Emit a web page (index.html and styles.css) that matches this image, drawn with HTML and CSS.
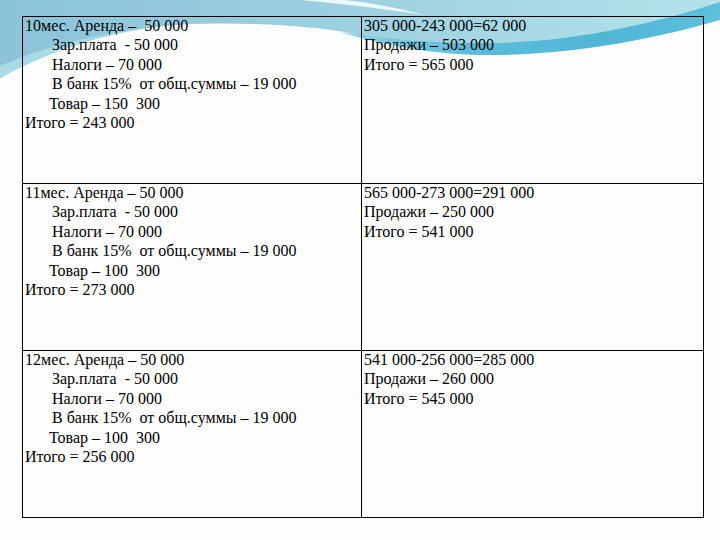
FILE: index.html
```html
<!DOCTYPE html>
<html lang="ru">
<head>
<meta charset="utf-8">
<title>Slide</title>
<link rel="stylesheet" href="styles.css">
</head>
<body>
<div class="slide">
  <svg class="bg" width="720" height="540" viewBox="0 0 720 540" aria-hidden="true">
    <defs>
      <linearGradient id="g1" x1="0" y1="0" x2="1" y2="0">
        <stop offset="0" stop-color="#8cc3d9"/>
        <stop offset="0.45" stop-color="#9bcfe0"/>
        <stop offset="1" stop-color="#b4e2ea"/>
      </linearGradient>
      <linearGradient id="g2" x1="0" y1="0" x2="1" y2="0">
        <stop offset="0" stop-color="#8fd0e2"/>
        <stop offset="0.35" stop-color="#5dbcd9"/>
        <stop offset="0.7" stop-color="#4fb6d6"/>
        <stop offset="1" stop-color="#5cc0da"/>
      </linearGradient>
    </defs>
    <rect width="720" height="540" fill="#fdfdfd"/>
    <path d="M0,0 H720 V18 C680,30 640,40 600,45 C550,52 490,54 450,50 C410,46 380,40 350,33 C310,25 240,22 190,24 C120,28 60,44 0,78 Z" fill="url(#g1)"/>
    <path d="M0,66 C55,42 115,30 190,24 C120,28 60,46 0,78 Z" fill="#a8dbe6"/>
    <path d="M340,32 C400,41 450,44 500,43 C580,40 650,25 720,2 V20 C650,40 580,53 500,55 C440,56 390,47 340,32 Z" fill="url(#g2)"/>
    <path d="M300,0 C345,4 385,9 425,15 C395,7 365,2 345,0 Z" fill="#eef8fa"/>
  </svg>

  <div class="grid">
    <div class="cell">
      <div class="ln">10мес. Аренда –  50 000</div>
      <div class="ln i28">Зар.плата  - 50 000</div>
      <div class="ln i28">Налоги – 70 000</div>
      <div class="ln i28">В банк 15%  от общ.суммы – 19 000</div>
      <div class="ln i24">Товар – 150  300</div>
      <div class="ln">Итого = 243 000</div>
    </div>
    <div class="cell">
      <div class="ln">305 000-243 000=62 000</div>
      <div class="ln">Продажи – 503 000</div>
      <div class="ln">Итого = 565 000</div>
    </div>

    <div class="cell">
      <div class="ln">11мес. Аренда – 50 000</div>
      <div class="ln i28">Зар.плата  - 50 000</div>
      <div class="ln i28">Налоги – 70 000</div>
      <div class="ln i28">В банк 15%  от общ.суммы – 19 000</div>
      <div class="ln i24">Товар – 100  300</div>
      <div class="ln">Итого = 273 000</div>
    </div>
    <div class="cell">
      <div class="ln">565 000-273 000=291 000</div>
      <div class="ln">Продажи – 250 000</div>
      <div class="ln">Итого = 541 000</div>
    </div>

    <div class="cell">
      <div class="ln">12мес. Аренда – 50 000</div>
      <div class="ln i28">Зар.плата  - 50 000</div>
      <div class="ln i28">Налоги – 70 000</div>
      <div class="ln i28">В банк 15%  от общ.суммы – 19 000</div>
      <div class="ln i24">Товар – 100  300</div>
      <div class="ln">Итого = 256 000</div>
    </div>
    <div class="cell">
      <div class="ln">541 000-256 000=285 000</div>
      <div class="ln">Продажи – 260 000</div>
      <div class="ln">Итого = 545 000</div>
    </div>
  </div>
</div>
</body>
</html>
```

FILE: styles.css
```css
html, body {
  margin: 0;
  padding: 0;
  background: #fdfdfd;
}

.slide {
  position: relative;
  width: 720px;
  height: 540px;
  overflow: hidden;
  font-family: "Liberation Serif", "Times New Roman", "DejaVu Serif", serif;
  font-size: 16px;
  color: #000;
}

.bg {
  position: absolute;
  left: 0;
  top: 0;
  display: block;
}

.grid {
  position: relative;
  margin: 16px 0 0 22px;
  width: 681px;
  display: grid;
  grid-template-columns: 339px 342px;
  grid-auto-rows: 167px;
  border-left: 1px solid #000;
  border-top: 1px solid #000;
}

.cell {
  border-right: 1px solid #000;
  border-bottom: 1px solid #000;
  padding: 0 2px;
}

.ln {
  line-height: 19.4px;
  white-space: pre;
  position: relative;
  top: -1px;
}

.i28 { padding-left: 27px; }
.i24 { padding-left: 24px; }
```
